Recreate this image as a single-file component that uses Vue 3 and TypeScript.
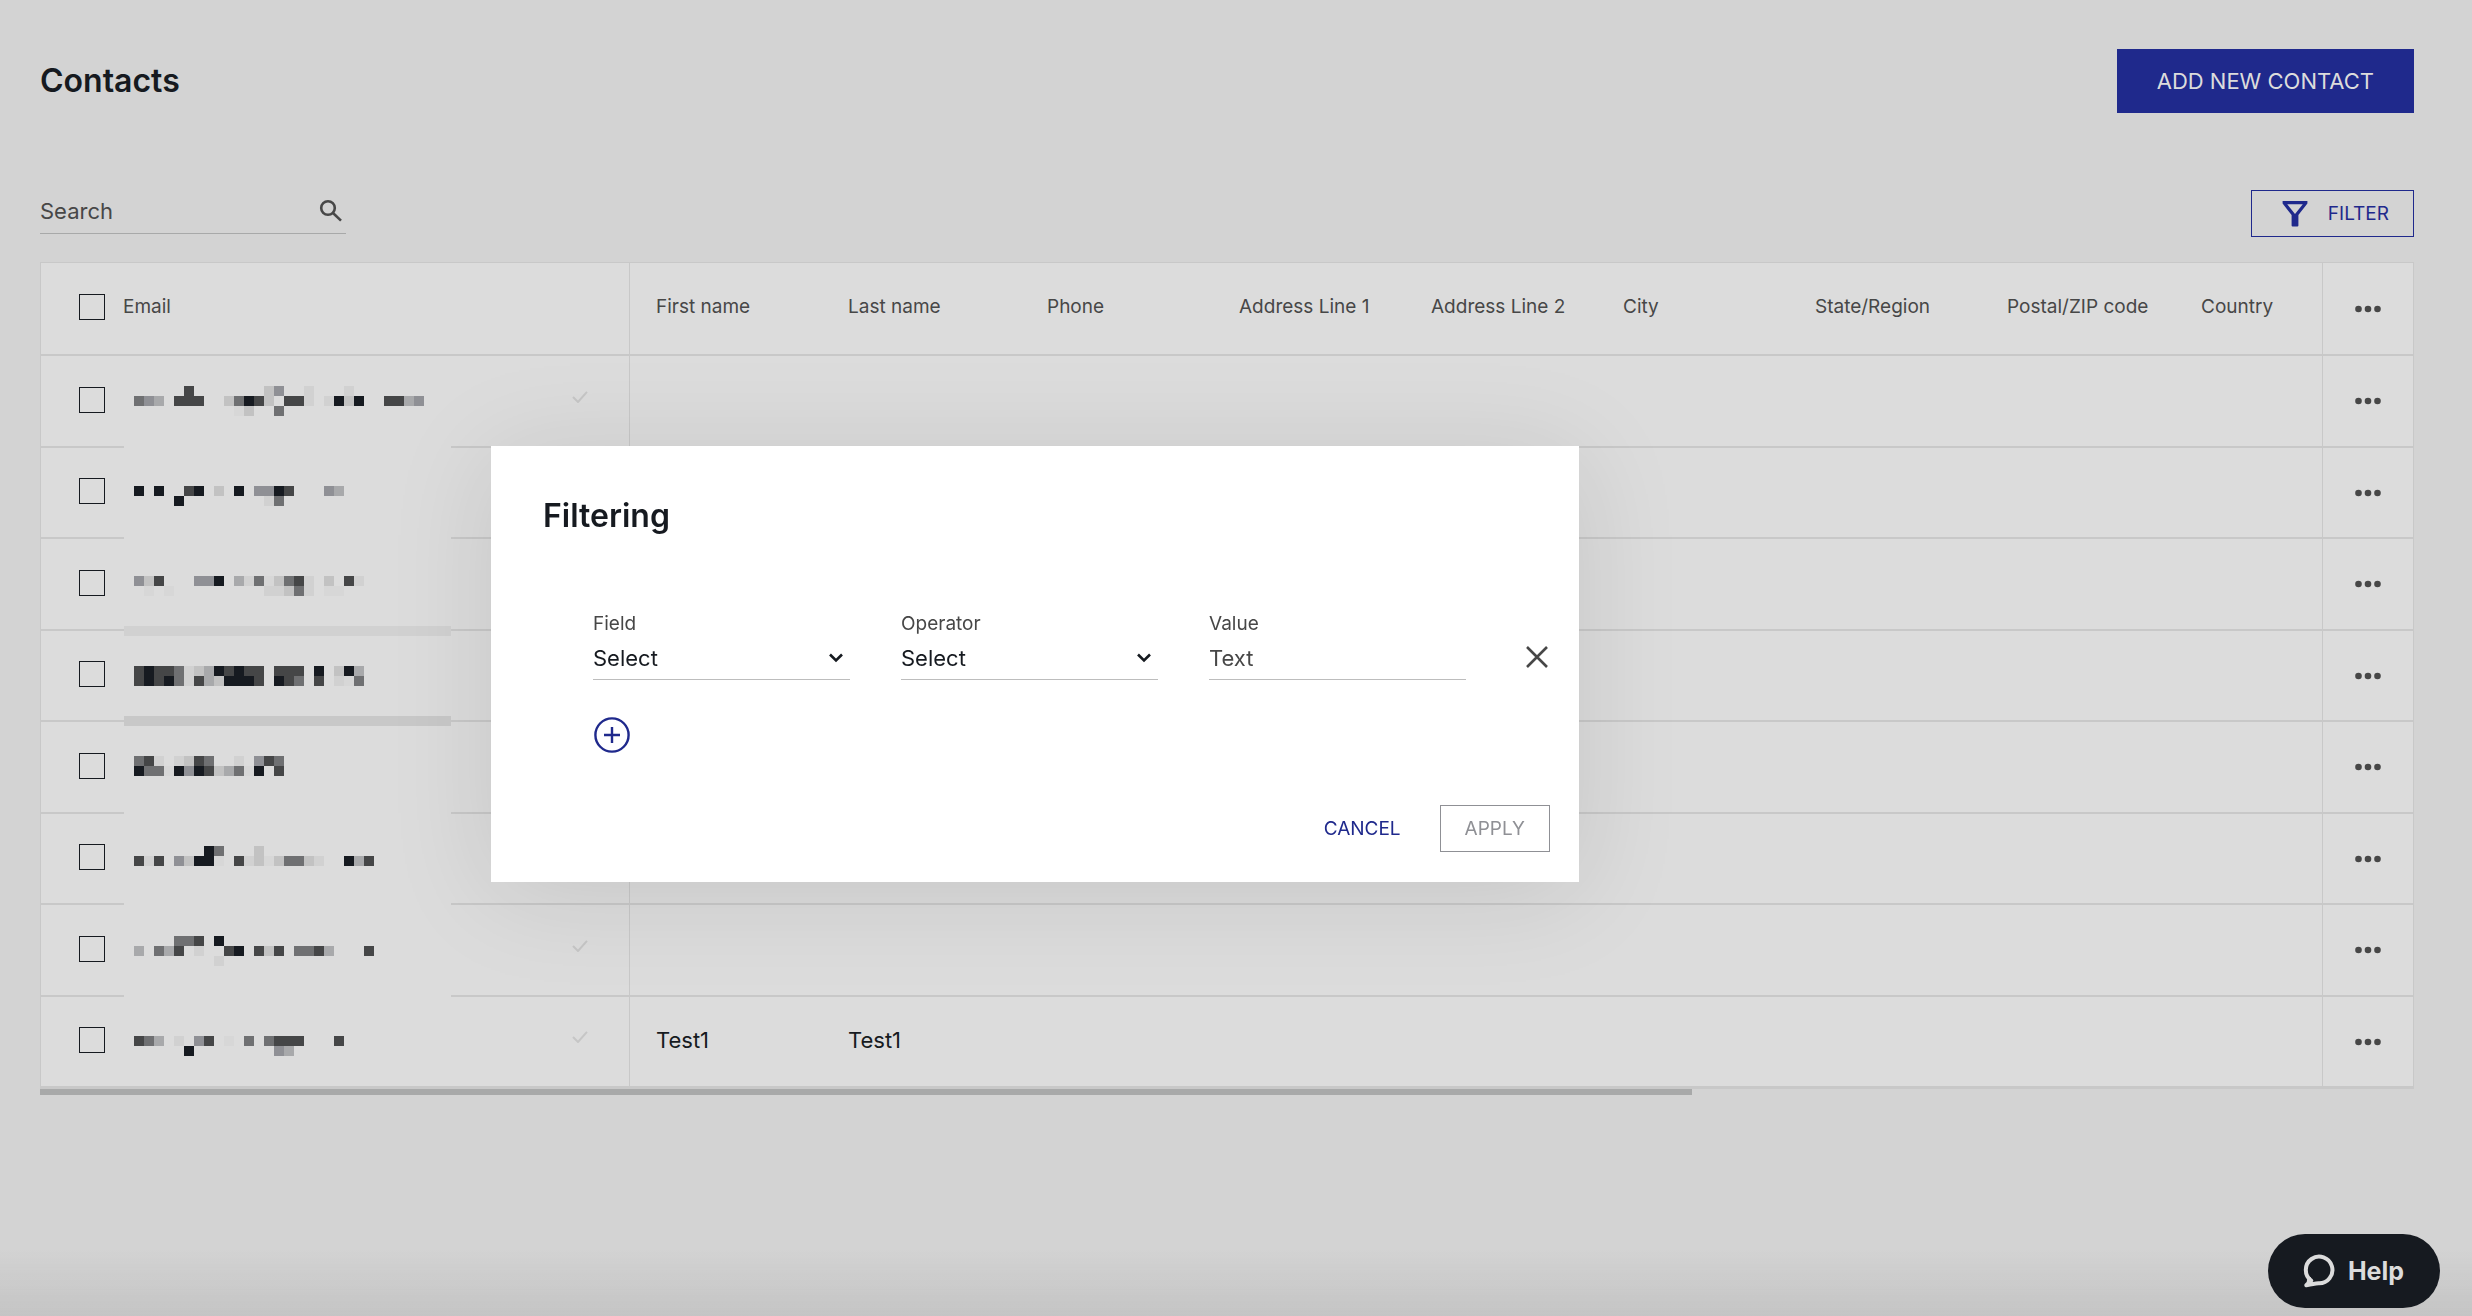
<script setup lang="ts">
import { computed, ref } from 'vue'

interface Column {
  key: string
  label: string
  width: string
}

interface Contact {
  id: number
  firstName?: string
  lastName?: string
  confirmed: boolean
}

const columns: Column[] = [
  { key: 'firstName', label: 'First name', width: '192px' },
  { key: 'lastName', label: 'Last name', width: '199px' },
  { key: 'phone', label: 'Phone', width: '192px' },
  { key: 'address1', label: 'Address Line 1', width: '192px' },
  { key: 'address2', label: 'Address Line 2', width: '192px' },
  { key: 'city', label: 'City', width: '192px' },
  { key: 'state', label: 'State/Region', width: '192px' },
  { key: 'zip', label: 'Postal/ZIP code', width: '194px' },
  { key: 'country', label: 'Country', width: 'auto' },
]

const contacts: Contact[] = [
  { id: 1, confirmed: true },
  { id: 2, confirmed: true },
  { id: 3, confirmed: true },
  { id: 4, confirmed: true },
  { id: 5, confirmed: true },
  { id: 6, confirmed: true },
  { id: 7, confirmed: true },
  { id: 8, confirmed: true, firstName: 'Test1', lastName: 'Test1' },
]

const cellText = (contact: Contact, key: string): string =>
  String((contact as unknown as Record<string, unknown>)[key] ?? '')

const search = ref('')
const value = ref('')

// Masked e-mail addresses: each string is one line of 10px blocks, each letter a shade.
const shades: Record<string, string> = {
  a: '#d1d1d1',
  b: '#c2c2c2',
  c: '#a8a9ab',
  d: '#8f9095',
  e: '#6f7072',
  f: '#454647',
  g: '#161a20',
  h: '#d7d7d7',
}

const maskLines: [number, string][] = [
  [0, '.....f.......bd..a...a'],
  [1, 'edc.fff..begfb.ffa.agbg..ffcd'],
  [2, '..........hb..e'],
  [10, 'g.g..fg.b.g.ddgf...dc'],
  [11, '....g........ae'],
  [19, 'dbf...ddg.caehbefa.b.fa'],
  [20, '.h.h.........aabea.hh'],
  [28, 'fgffeabcgfgff.fff.g.bgc'],
  [29, 'fgfgeafcbgggf.gfe.f.ahe'],
  [37, 'efa.abfe..a.dfe'],
  [38, 'geehgdgfbcehg.f'],
  [46, '.......ge...b'],
  [47, 'faf.dbggh.fabhbeeba..gcf'],
  [55, '....eef.g'],
  [56, 'c.ecf.a..fg.fbf.eefc...f'],
  [57, '........a'],
  [65, 'fec.a.df.h.e.efff...f'],
  [66, '.....g........dc'],
]

const blocks = computed(() =>
  maskLines.flatMap(([line, cells]) =>
    [...cells].flatMap((shade, i) =>
      shade === '.' ? [] : [{ x: 10 + i * 10, y: line * 10, fill: shades[shade] }],
    ),
  ),
)
</script>

<template>
  <div class="page">
    <header class="top">
      <h1>Contacts</h1>
      <button class="primary" type="button">ADD NEW CONTACT</button>
    </header>

    <div class="tools">
      <div class="search">
        <input v-model="search" type="text" placeholder="Search" aria-label="Search" />
        <svg width="24" height="24" viewBox="0 0 24 24" aria-hidden="true">
          <circle cx="9" cy="9" r="6.8" />
          <path d="M14 14l8 7.6" />
        </svg>
      </div>
      <button class="filter" type="button">
        <svg width="26" height="26" viewBox="0 0 26 26" aria-hidden="true">
          <path
            fill-rule="evenodd"
            d="M.6 0h24.8v2.6L16.4 14v10.500q0 1-1 1h-4.800q-1 0-1-1V14L.6 2.600zM5.200 3.200L13 13l7.800-9.800z"
          />
        </svg>
        <span>FILTER</span>
      </button>
    </div>

    <div class="grid">
      <table>
        <colgroup>
          <col class="col-email" />
          <col v-for="c in columns" :key="c.key" :style="{ width: c.width }" />
          <col class="col-menu" />
        </colgroup>
        <thead>
          <tr>
            <th class="email">
              <div class="email-cell">
                <input type="checkbox" aria-label="Select all" />
                <span>Email</span>
              </div>
            </th>
            <th v-for="c in columns" :key="c.key">{{ c.label }}</th>
            <th class="menu">
              <button type="button" aria-label="Columns">
                <svg width="26" height="8" viewBox="0 0 26 8" aria-hidden="true">
                  <circle cx="3.500" cy="4" r="3.300" />
                  <circle cx="13" cy="4" r="3.300" />
                  <circle cx="22.500" cy="4" r="3.300" />
                </svg>
              </button>
            </th>
          </tr>
        </thead>
        <tbody>
          <tr v-for="contact in contacts" :key="contact.id">
            <td class="email">
              <div class="email-cell">
                <input type="checkbox" aria-label="Select contact" />
                <svg v-if="contact.confirmed" class="tick" width="16" height="12" viewBox="0 0 16 12" aria-hidden="true">
                  <path d="M1 6l5 5L15 .8" />
                </svg>
              </div>
            </td>
            <td v-for="c in columns" :key="c.key">{{ cellText(contact, c.key) }}</td>
            <td class="menu">
              <button type="button" aria-label="Actions">
                <svg width="26" height="8" viewBox="0 0 26 8" aria-hidden="true">
                  <circle cx="3.500" cy="4" r="3.300" />
                  <circle cx="13" cy="4" r="3.300" />
                  <circle cx="22.500" cy="4" r="3.300" />
                </svg>
              </button>
            </td>
          </tr>
        </tbody>
      </table>
      <svg class="mask" width="327" height="680" viewBox="0 0 327 680" shape-rendering="crispEdges" aria-hidden="true">
        <rect x="0" y="50" width="327" height="570" fill="#dcdcdc" />
        <rect x="0" y="240" width="327" height="10" fill="#d1d1d1" />
        <rect x="0" y="330" width="327" height="10" fill="#c8c8c8" />
        <rect v-for="(b, i) in blocks" :key="i" :x="b.x" :y="b.y" width="10" height="10" :fill="b.fill" />
      </svg>
      <div class="scrollbar"></div>
    </div>

    <div class="fade"></div>

    <button class="help" type="button">
      <svg width="32" height="34" viewBox="0 0 32 34" aria-hidden="true">
        <path
          d="M8.200 26.600A13.300 13.300 0 1 1 15.500 29.200Q11 29.500 3.300 31.200Q6.300 29 6.300 24.500"
        />
      </svg>
      <span>Help</span>
    </button>

    <div class="overlay">
      <section class="dialog" role="dialog" aria-labelledby="dialog-title">
        <h2 id="dialog-title">Filtering</h2>
        <div class="fields">
          <div class="field">
            <label for="field">Field</label>
            <div class="control">
              <select id="field">
                <option>Select</option>
              </select>
              <svg width="16" height="10" viewBox="0 0 16 10" aria-hidden="true"><path d="M2 1.500l6 6 6-6" /></svg>
            </div>
          </div>
          <div class="field">
            <label for="operator">Operator</label>
            <div class="control">
              <select id="operator">
                <option>Select</option>
              </select>
              <svg width="16" height="10" viewBox="0 0 16 10" aria-hidden="true"><path d="M2 1.500l6 6 6-6" /></svg>
            </div>
          </div>
          <div class="field">
            <label for="value">Value</label>
            <div class="control">
              <input id="value" v-model="value" type="text" placeholder="Text" />
            </div>
          </div>
          <button class="icon remove" type="button" aria-label="Remove">
            <svg width="24" height="24" viewBox="0 0 24 24" aria-hidden="true"><path d="M2 2l20 20M22 2L2 22" /></svg>
          </button>
        </div>
        <button class="icon add" type="button" aria-label="Add">
          <svg width="38" height="38" viewBox="0 0 38 38" aria-hidden="true">
            <circle cx="19" cy="19" r="16.600" />
            <path d="M19 11v16M11 19h16" />
          </svg>
        </button>
        <footer>
          <button class="text" type="button">CANCEL</button>
          <button class="apply" type="button" disabled>APPLY</button>
        </footer>
      </section>
    </div>
  </div>
</template>

<style>
body {
  background: #d3d3d3;
}
</style>

<style scoped>
* {
  box-sizing: border-box;
}

.page {
  min-height: 100vh;
  padding: 49px 58px 0 40px;
  background: #d3d3d3;
  color: #161a20;
  font: 22px/32px Inter, 'Liberation Sans', sans-serif;
}

button,
input,
select {
  margin: 0;
  padding: 0;
  border: 0;
  border-radius: 0;
  background: none;
  color: inherit;
  font: inherit;
}

svg {
  display: block;
  flex: none;
}

h1,
h2 {
  margin: 0;
  font-size: 32px;
  line-height: 40px;
  font-weight: 600;
}

.top {
  display: flex;
  justify-content: space-between;
  align-items: center;
}

.primary {
  height: 64px;
  padding: 0 40px;
  background: #1f298c;
  color: #dcdcdc;
}

.tools {
  display: flex;
  justify-content: space-between;
  align-items: flex-end;
  margin-top: 77px;
  height: 47px;
}

.search {
  display: flex;
  align-items: center;
  width: 306px;
  height: 47px;
  margin-bottom: 3px;
  padding: 2px 3px 0 0;
  border-bottom: 1px solid #a8a9a9;
}

.search input {
  flex: 1;
  min-width: 0;
  height: 32px;
}

.search svg,
.remove svg {
  fill: none;
  stroke: #474747;
  stroke-width: 2.6;
}

input::placeholder {
  color: #474747;
  opacity: 1;
}

.filter {
  display: flex;
  align-items: center;
  gap: 20px;
  height: 47px;
  padding: 0 24px 0 30px;
  border: 1px solid #1f298c;
  color: #1f298c;
  font-size: 19px;
}

.filter svg {
  fill: #1f298c;
}

.grid {
  position: relative;
  margin-top: 25px;
}

table {
  width: 100%;
  table-layout: fixed;
  border-collapse: separate;
  border-spacing: 0;
  border: 1px solid #c8c8c8;
  background: #dcdcdc;
}

.col-email {
  width: 589px;
}

.col-menu {
  width: 91px;
}

th,
td {
  height: 92px;
  padding: 0 0 3px 26px;
  border-bottom: 2px solid #c8c8c8;
  text-align: left;
  font-weight: 400;
  white-space: nowrap;
}

th {
  height: 93px;
  color: #474747;
  font-size: 19px;
}

tbody tr:nth-child(even) td {
  height: 91px;
}

.email {
  padding-left: 38px;
  border-right: 1px solid #c8c8c8;
}

.email-cell {
  display: flex;
  align-items: center;
  gap: 18px;
}

.email-cell input {
  appearance: none;
  width: 26px;
  height: 26px;
  border: 1px solid #161a20;
}

.tick {
  margin: 0 41px 6px auto;
  fill: none;
  stroke: #c6c6c6;
  stroke-width: 2;
}

.menu {
  padding: 0;
  border-left: 1px solid #c8c8c8;
}

.menu button {
  display: flex;
  align-items: center;
  justify-content: center;
  width: 100%;
  height: 48px;
}

.menu svg {
  fill: #474747;
}

.mask {
  position: absolute;
  top: 124px;
  left: 84px;
}

.scrollbar {
  width: 69.6%;
  height: 6px;
  background: #a8a9a9;
}

.fade {
  position: fixed;
  left: 0;
  right: 0;
  bottom: 0;
  height: 66px;
  background: linear-gradient(to bottom, #d3d3d300, #c4c4c4);
}

.help {
  position: fixed;
  right: 32px;
  bottom: 8px;
  display: flex;
  align-items: center;
  gap: 13px;
  height: 74px;
  padding: 0 36px 0 35px;
  border-radius: 37px;
  background: #161a20;
  color: #dcdcdc;
  font-size: 25px;
  font-weight: 700;
}

.help svg {
  fill: none;
  stroke: #dcdcdc;
  stroke-width: 4;
  stroke-linecap: round;
  stroke-linejoin: round;
}

.overlay {
  position: fixed;
  inset: 0;
  display: flex;
  align-items: center;
  justify-content: center;
  padding: 12px 402px 0 0;
}

.dialog {
  width: 1088px;
  padding: 50px 29px 30px 52px;
  background: #fff;
  box-shadow: 0 10px 100px rgba(0, 0, 0, 0.1);
}

.fields {
  display: flex;
  align-items: flex-end;
  gap: 51px;
  margin-top: 72px;
  padding-left: 50px;
}

.field {
  flex: 1 1 0;
  min-width: 0;
}

.field label {
  display: block;
  color: #474747;
  font-size: 19px;
  line-height: 32px;
}

.control {
  display: flex;
  align-items: center;
  height: 40px;
  padding-bottom: 3px;
  border-bottom: 1px solid #bdbdbd;
}

.control select,
.control input {
  flex: 1;
  min-width: 0;
  height: 36px;
}

.control select {
  appearance: none;
  margin-right: -22px;
  padding-right: 22px;
}

.control svg {
  margin-right: 6px;
  fill: none;
  stroke: #161a20;
  stroke-width: 2.6;
  pointer-events: none;
}

.icon {
  display: block;
}

.remove {
  margin: 0 1px 11px 8px;
}

.add {
  margin: 36px 0 0 50px;
}

.add svg {
  fill: none;
  stroke: #1f298c;
  stroke-width: 2.4;
}

footer {
  display: flex;
  justify-content: flex-end;
  gap: 39px;
  margin-top: 51px;
  font-size: 19px;
}

.text {
  color: #1f298c;
}

.apply {
  height: 47px;
  padding: 0 24px;
  border: 1px solid #8f9095;
  color: #8f9095;
}
</style>
